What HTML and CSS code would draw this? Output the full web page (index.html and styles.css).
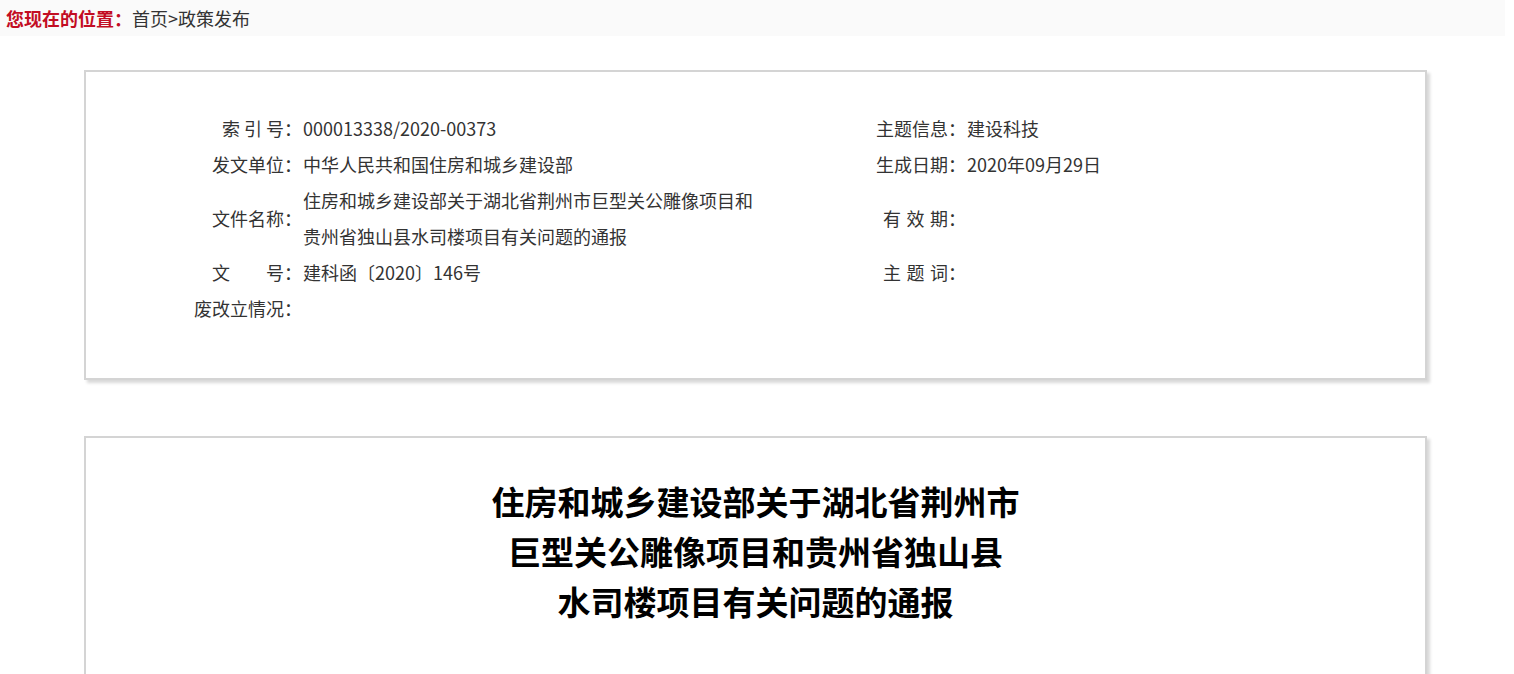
FILE: index.html
```html
<!DOCTYPE html>
<html lang="zh-CN">
<head>
    <meta charset="UTF-8">
    <meta name="viewport" content="width=device-width, initial-scale=1.0">
    <title>政策发布</title>
    <link rel="stylesheet" href="styles.css">
</head>
<body>

    <!-- Breadcrumb -->
    <div class="crumb">
        <span class="crumb-label">您现在的位置：</span><a href="#">首页</a>&gt;<a href="#">政策发布</a>
    </div>

    <!-- Document info -->
    <div class="box info-box">
        <div class="info">
            <div class="label">索 引 号：</div>
            <div class="value">000013338/2020-00373</div>
            <div class="label">主题信息：</div>
            <div class="value">建设科技</div>

            <div class="label">发文单位：</div>
            <div class="value">中华人民共和国住房和城乡建设部</div>
            <div class="label">生成日期：</div>
            <div class="value">2020年09月29日</div>

            <div class="label">文件名称：</div>
            <div class="value">住房和城乡建设部关于湖北省荆州市巨型关公雕像项目和贵州省独山县水司楼项目有关问题的通报</div>
            <div class="label spaced">有 效 期：</div>
            <div class="value"></div>

            <div class="label">文　　号：</div>
            <div class="value">建科函〔2020〕146号</div>
            <div class="label spaced">主 题 词：</div>
            <div class="value"></div>

            <div class="label">废改立情况：</div>
            <div class="value"></div>
            <div class="label"></div>
            <div class="value"></div>
        </div>
    </div>

    <!-- Article -->
    <div class="box article">
        <h1 class="title">住房和城乡建设部关于湖北省荆州市<br>巨型关公雕像项目和贵州省独山县<br>水司楼项目有关问题的通报</h1>
    </div>

</body>
</html>
```

FILE: styles.css
```css
/* General */
* {
    margin: 0;
    padding: 0;
    box-sizing: border-box;
}
body {
    background: #fff;
    color: #333;
    font-family: "Microsoft YaHei", "Noto Sans CJK SC", "Noto Sans", sans-serif;
    font-size: 18px;
}
a {
    color: #333;
    text-decoration: none;
}

/* Breadcrumb */
.crumb {
    width: 1505px;
    height: 36px;
    line-height: 36px;
    padding-left: 6px;
    background: #fafafa;
    color: #333;
}
.crumb-label {
    color: #c30d23;
    font-weight: bold;
}

/* Boxes */
.box {
    width: 1343px;
    margin-left: 84px;
    background: #fff;
    border: 2px solid #d4d4d4;
    box-shadow: 3px 3px 3px #d9d9d9;
}
.info-box {
    margin-top: 34px;
    padding: 38px 0 52px;
}
.article {
    margin-top: 56px;
    padding: 38px 0 120px;
}

/* Info grid */
.info {
    display: grid;
    grid-template-columns: 216px 460px 204px 1fr;
    align-items: center;
    line-height: 36px;
}
.label {
    text-align: right;
    white-space: nowrap;
}
.label.spaced {
    word-spacing: 1.5px;
}
.value {
    padding-left: 1px;
    min-height: 36px;
}

/* Title */
.title {
    text-align: center;
    font-size: 33px;
    line-height: 50px;
    font-weight: bold;
    color: #000;
}
```
